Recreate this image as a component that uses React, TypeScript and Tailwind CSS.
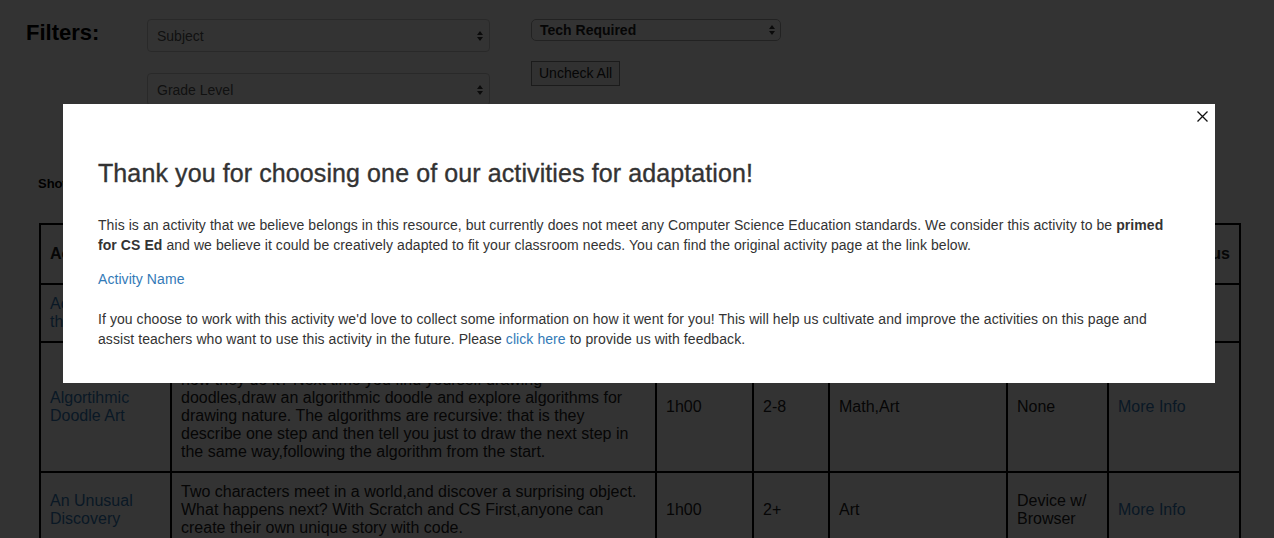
import React from "react";

const Arrows = () => (
  <svg width="8" height="12" viewBox="0 0 8 12" className="shrink-0">
    <path d="M4 1 L7 5 L1 5 Z" fill="#333" />
    <path d="M4 11 L7 7 L1 7 Z" fill="#333" />
  </svg>
);

const cell = "border-2 border-black px-[9px] py-[10px] align-middle text-left";

export default function App() {
  return (
    <div className="relative w-[1274px] h-[538px] overflow-hidden bg-white text-[#333] font-['Liberation_Sans',Arial,sans-serif]">
      {/* Filters */}
      <div className="flex pt-[19px] pl-[26px]">
        <div className="w-[121px] pt-[1px] text-[22px] leading-[26px] font-bold text-black">Filters:</div>
        <div className="flex flex-col gap-[21px] w-[343px]">
          <div className="h-[33px] border border-[#ccc] rounded-[4px] flex items-center justify-between pl-[9px] pr-[5px] pt-[1px] text-[14px] text-[#555]">
            <span>Subject</span>
            <Arrows />
          </div>
          <div className="h-[33px] border border-[#ccc] rounded-[4px] flex items-center justify-between pl-[9px] pr-[5px] pt-[1px] text-[14px] text-[#555]">
            <span>Grade Level</span>
            <Arrows />
          </div>
        </div>
        <div className="ml-[41px] flex flex-col items-start">
          <div className="w-[250px] h-[22px] border border-[#aaa] rounded-[5px] flex items-center justify-between pl-[8px] pr-[4px] text-[14px] font-bold text-[#222]">
            <span>Tech Required</span>
            <Arrows />
          </div>
          <div className="mt-[20px] h-[25px] px-[7px] border border-[#888] bg-[#f2f2f2] flex items-center text-[14px] text-[#222]">
            Uncheck All
          </div>
        </div>
      </div>

      <div className="mt-[68px] ml-[38px] text-[13px] font-bold text-black">Showing all activities</div>

      <table className="mt-[29px] ml-[39px] w-[1200px] border-collapse table-fixed text-[16px] leading-[18px] text-[#222]">
        <colgroup>
          <col className="w-[131px]" />
          <col className="w-[485px]" />
          <col className="w-[97px]" />
          <col className="w-[76px]" />
          <col className="w-[178px]" />
          <col className="w-[101px]" />
          <col className="w-[132px]" />
        </colgroup>
        <thead>
          <tr className="h-[60px] font-bold">
            <th className={cell}>Activity</th>
            <th className={cell}>Description</th>
            <th className={cell}>Time</th>
            <th className={cell}>Grade</th>
            <th className={cell}>Subject</th>
            <th className={cell}>Tech</th>
            <th className={cell + " whitespace-nowrap text-right"}>CS Focus</th>
          </tr>
        </thead>
        <tbody>
          <tr>
            <td className={cell + " text-[#337ab7]"}>
              Across
              <br />
              the Board
            </td>
            <td className={cell}>Play a game across the board and learn about patterns.</td>
            <td className={cell}>0h45</td>
            <td className={cell}>K-2</td>
            <td className={cell}>Math</td>
            <td className={cell}>None</td>
            <td className={cell + " text-[#337ab7]"}>More Info</td>
          </tr>
          <tr>
            <td className={cell + " text-[#337ab7]"}>Algortihmic Doodle Art</td>
            <td className={cell + " whitespace-nowrap"}>
              Computers use algorithms everywhere, but what are they and
              <br />
              how they do it? Next time you find yourself drawing
              <br />
              doodles,draw an algorithmic doodle and explore algorithms for
              <br />
              drawing nature. The algorithms are recursive: that is they
              <br />
              describe one step and then tell you just to draw the next step in
              <br />
              the same way,following the algorithm from the start.
            </td>
            <td className={cell}>1h00</td>
            <td className={cell}>2-8</td>
            <td className={cell}>Math,Art</td>
            <td className={cell}>None</td>
            <td className={cell + " text-[#337ab7]"}>More Info</td>
          </tr>
          <tr>
            <td className={cell + " text-[#337ab7]"}>An Unusual Discovery</td>
            <td className={cell + " whitespace-nowrap"}>
              Two characters meet in a world,and discover a surprising object.
              <br />
              What happens next? With Scratch and CS First,anyone can
              <br />
              create their own unique story with code.
            </td>
            <td className={cell}>1h00</td>
            <td className={cell}>2+</td>
            <td className={cell}>Art</td>
            <td className={cell}>Device w/ Browser</td>
            <td className={cell + " text-[#337ab7]"}>More Info</td>
          </tr>
        </tbody>
      </table>

      {/* Overlay */}
      <div className="absolute inset-0 bg-black/80" />

      {/* Modal */}
      <div className="absolute left-[63px] top-[104px] w-[1152px] bg-white pt-[56px] px-[35px] pb-[34px] text-[#333]">
        <svg className="absolute left-[1134px] top-[7px]" width="11" height="11" viewBox="0 0 11 11">
          <path d="M0.5 0.5 L10.5 10.5 M10.5 0.5 L0.5 10.5" stroke="#111" strokeWidth="1.3" />
        </svg>
        <h3 className="text-[25px] leading-[26px] tracking-[0.1px] [-webkit-text-stroke:0.35px_#333]">
          Thank you for choosing one of our activities for adaptation!
        </h3>
        <div className="w-[1068px] text-[14px] leading-[20px] tracking-[0.07px]">
          <p className="mt-[29px]">
            This is an activity that we believe belongs in this resource, but currently does not meet any Computer Science Education
            standards. We consider this activity to be <b>primed for CS Ed</b> and we believe it could be creatively adapted to fit
            your classroom needs. You can find the original activity page at the link below.
          </p>
          <p className="mt-[14px] text-[#337ab7]">Activity Name</p>
          <p className="mt-[20px]">
            If you choose to work with this activity we'd love to collect some information on how it went for you! This will help us
            cultivate and improve the activities on this page and assist teachers who want to use this activity in the future. Please{" "}
            <span className="text-[#337ab7]">click here</span> to provide us with feedback.
          </p>
        </div>
      </div>
    </div>
  );
}
